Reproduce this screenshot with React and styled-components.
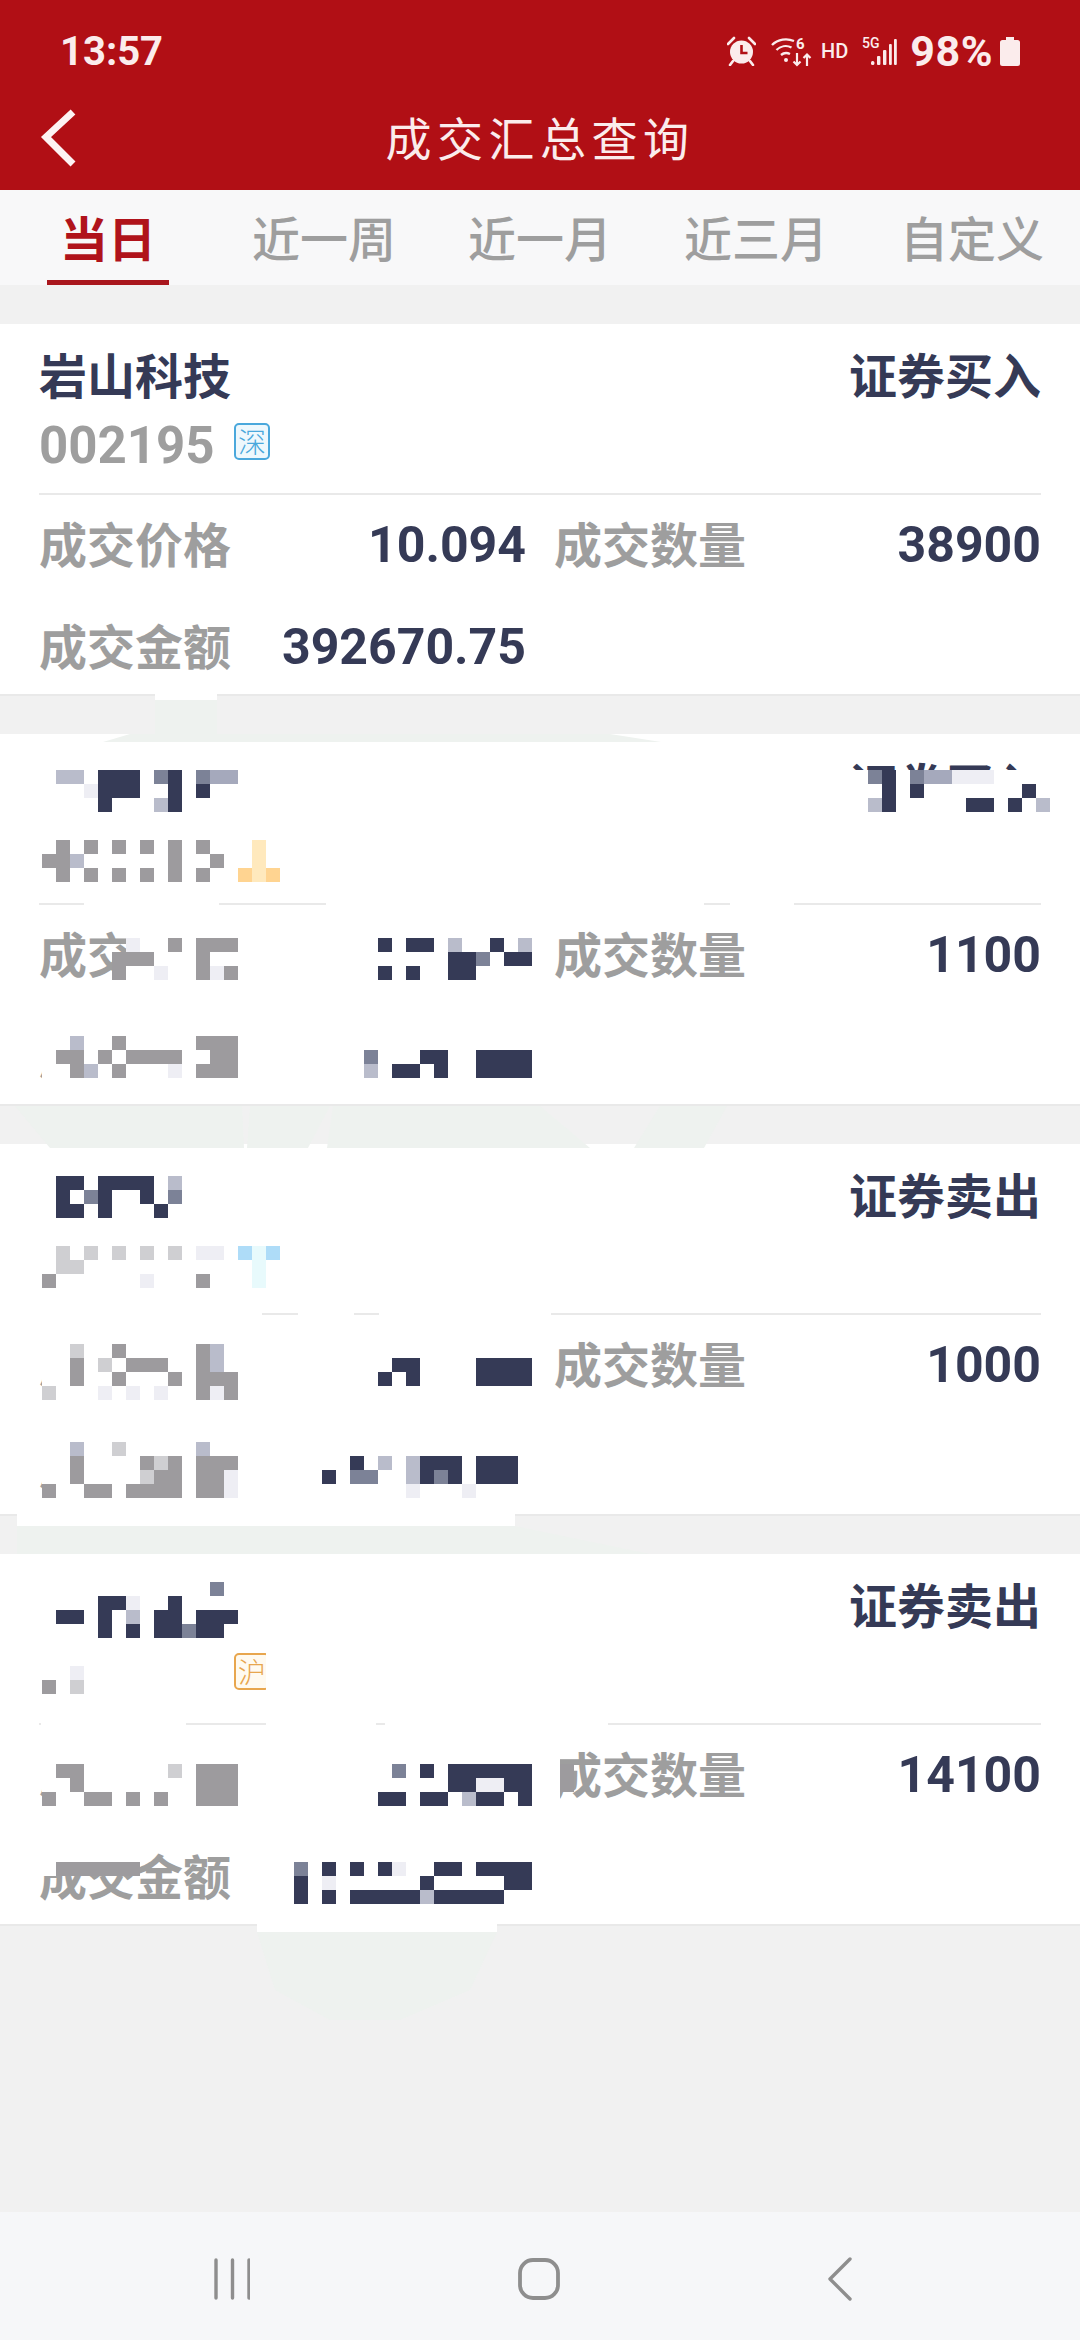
import React from 'react'
import styled, { createGlobalStyle } from 'styled-components'

const GlobalStyle = createGlobalStyle`
  html, body { margin: 0; padding: 0; background: #f1f1f1; }
  body { font-family: Roboto, "Noto Sans CJK SC", sans-serif; }
`

const CELL = 14
const palette = {
  d: '#353a56', m: '#7c8297', a: '#a5a9bc', l: '#b9bccb', e: '#eeeef4',
  g: '#9d9b9e', h: '#cfcfd2', y: '#ffe9bd', o: '#ffd491', b: '#aedcf8',
  p: '#e8fafc', '.': '#ffffff',
}

const tabs = ['当日', '近一周', '近一月', '近三月', '自定义']

const WHITE = '..............'

// mosaic blocks are placed on the 14px grid of the redaction, col 0 = x 42
const cards = [
  {
    name: '岩山科技', code: '002195', market: '深', side: '证券买入',
    price: '10.094', qty: '38900', amount: '392670.75',
  },
  {
    side: '证券买入', market: '沪', qty: '1100',
    gaps: [[84, 135], [326, 378], [730, 64]],
    masks: [
      { col: 0, y: 36, rows: [' ll ddd md maa', '   eddd  d d', '    d   ld'] },
      { col: 0, y: 92, rows: ['             ....', ' g g g g g g ..y.', 'ggl      g  g..y.', ' g g g g g g .oyo'] },
      { col: 5, y: 190, rows: [' ........', ' e..g.ggg', 'ggg...g..', 'g..e..geg'] },
      { col: 24, y: 204, rows: ['d.dd.l..d.l', '.....ddm.dd', 'd.d..dd....'] },
      { col: 0, y: 288, rows: [WHITE, '..l..g.....ggg', '.gg.g.gggg..gg', '..gl.g...e.ggg', WHITE] },
      { col: 23, y: 302, rows: ['', 'm...dd..dddd', 'l.dd.d..dddd'] },
      { col: 57, y: 36, rows: ['..md.maaeee....', '...d.d.......d.', '..ld.....dd.d.l'] },
    ],
  },
  {
    side: '证券卖出', market: '深', qty: '1000',
    gaps: [[39, 223], [298, 56], [379, 172]],
    masks: [
      { col: 0, y: 32, rows: [' dd dddd l', ' d md  d m', ' dd d   d'] },
      { col: 0, y: 88, rows: ['             ....', ' h h h h h ee.bpb', ' hh          ..p.', 'g      e   g ..p.'] },
      { col: 0, y: 186, rows: [WHITE, '..h..g.....gl.', '..g.h.ggg..gl.', '..g..g...g.ggg', 'h...e.e.e..geg'] },
      { col: 24, y: 214, rows: [' dd    dddd', 'd d    dddd'] },
      { col: 0, y: 284, rows: [WHITE, '..l..h.....l..', '..g....ghg.ggg', '..g....hgg.gge', 'g..gg.gggg.gge'] },
      { col: 20, y: 312, rows: ['  d l lddd ddd', 'd mm  ldmd ddd', '      e   e'] },
    ],
  },
  {
    side: '证券卖出', market: '沪', qty: '14100',
    gaps: [[41, 145], [266, 110], [385, 223]],
    masks: [
      { col: 0, y: 28, rows: ['            m', '    dde  d', ' dd d l dd ddd', '    d d ddmdd'] },
      { col: 0, y: 112, rows: ['  e', 'g h'] },
      { col: 16, y: 98, rows: ['.', '.', '.'] },
      { col: 0, y: 196, rows: [WHITE, '.gg......h.ggg', '..g........ggg', 'g..gg.g.g..ggg'] },
      { col: 24, y: 196, rows: ['           ..', ' m d dddddd..g', '     ddeedd..g', 'dd dd ldd d..'] },
      { col: 0, y: 294, rows: ['.......', '.gggggg'] },
      { col: 18, y: 308, rows: ['m d d de  dd dddd', 'd e      d     dd', 'd d dddddlddddd'] },
    ],
  },
]

const Page = styled.div`
  position: relative;
  width: 1080px;
  min-height: 2340px;
  display: flex;
  flex-direction: column;
  background: #f1f1f1;
  overflow: hidden;
`

const Header = styled.header`
  background: #b10f15;
  color: #fbecec;
`

const StatusBar = styled.div`
  height: 96px;
  box-sizing: border-box;
  padding: 6px 60px 0 60px;
  display: flex;
  align-items: center;
  justify-content: space-between;
`

const Clock = styled.span`
  font-size: 40px;
  font-weight: 700;
`

const StatusIcons = styled.div`
  display: flex;
  align-items: center;
`

const AlarmSlot = styled.span`
  display: flex;
  margin-right: 15px;
`

const HdLabel = styled.span`
  font-size: 20px;
  font-weight: 500;
  margin: 0 14px 0 9px;
`

const Battery = styled.span`
  font-size: 43px;
  font-weight: 700;
  letter-spacing: 0.5px;
  margin: 0 7px 0 13px;
`

const TitleBar = styled.div`
  height: 94px;
  box-sizing: border-box;
  padding-bottom: 10px;
  display: grid;
  grid-template-columns: 1fr auto 1fr;
  align-items: center;
`

const BackButton = styled.button`
  border: 0;
  padding: 0 0 0 40px;
  background: none;
  justify-self: start;
  display: flex;
`

const Title = styled.h1`
  margin: 0 0 5px;
  font-size: 46px;
  font-weight: 400;
  letter-spacing: 5.5px;
`

const TabBar = styled.nav`
  height: 95px;
  display: grid;
  grid-template-columns: repeat(5, 1fr);
  background: #f8f8f9;
`

const Tab = styled.div`
  position: relative;
  padding-bottom: 3px;
  display: flex;
  align-items: center;
  justify-content: center;
  font-size: 48px;
  font-weight: ${(p) => (p.$active ? 700 : 500)};
  color: ${(p) => (p.$active ? '#b0131b' : '#9e9e9e')};
  &::after {
    content: '';
    display: ${(p) => (p.$active ? 'block' : 'none')};
    position: absolute;
    bottom: 0;
    left: 47px;
    width: 122px;
    height: 5px;
    background: #a9161d;
  }
`

const List = styled.main`
  flex: 1;
  padding-top: 39px;
  display: flex;
  flex-direction: column;
  gap: 38px;
`

const Card = styled.article`
  position: relative;
  height: 372px;
  box-sizing: border-box;
  padding: 16px 39px 0;
  background: #fff;
  border-bottom: 2px solid #e9e9e9;
`

const TopRow = styled.div`
  height: 70px;
  display: flex;
  align-items: center;
  justify-content: space-between;
`

const Name = styled.div`
  padding-bottom: 5px;
  font-size: 48px;
  font-weight: 700;
  color: #353a56;
`

const CodeRow = styled.div`
  height: 70px;
  display: flex;
  align-items: center;
`

const Code = styled.span`
  width: 172px;
  font-size: 51px;
  font-weight: 700;
  color: #9e9e9e;
`

const Tag = styled.span`
  margin: -8px 0 0 23px;
  width: 36px;
  height: 37px;
  box-sizing: border-box;
  display: flex;
  align-items: center;
  justify-content: center;
  border: 2px solid ${(p) => p.$color};
  border-radius: 5px;
  background: ${(p) => p.$bg};
  color: ${(p) => p.$color};
  font-size: 28px;
  font-weight: 300;
`

const Divider = styled.div`
  height: 2px;
  margin-top: 13px;
  background: #e9e9e9;
`

const Details = styled.div`
  margin-top: 3px;
  display: grid;
  grid-template-columns: 487px 487px;
  grid-auto-rows: 94px;
  column-gap: 28px;
  row-gap: 8px;
`

const Field = styled.div`
  display: flex;
  align-items: center;
  justify-content: space-between;
`

const Label = styled.span`
  padding-bottom: 6px;
  font-size: 48px;
  font-weight: 700;
  color: #9e9e9e;
`

const Value = styled.span`
  font-size: 50px;
  font-weight: 700;
  color: #353a56;
`

const MosaicBox = styled.svg`
  position: absolute;
  left: ${(p) => 42 + p.$col * CELL}px;
  top: ${(p) => p.$y}px;
  shape-rendering: crispEdges;
`

const GapPatch = styled.div`
  position: absolute;
  top: 165px;
  height: 8px;
  left: ${(p) => p.$x}px;
  width: ${(p) => p.$w}px;
  background: #fff;
`

const Smudges = styled.svg`
  position: absolute;
  left: 0;
  top: 0;
  pointer-events: none;
`

const NavBar = styled.footer`
  height: 128px;
  box-sizing: border-box;
  padding: 5px 228px 0 214px;
  display: flex;
  align-items: center;
  justify-content: space-between;
  background: #f6f7f9;
`

function Mosaic({ col, y, rows }) {
  const width = Math.max(...rows.map((r) => r.length)) * CELL
  return (
    <MosaicBox $col={col} $y={y} width={width} height={rows.length * CELL} aria-hidden="true">
      {rows.map((row, r) =>
        [...row].map((c, i) =>
          c === ' ' ? null : (
            <rect key={`${r}-${i}`} x={i * CELL} y={r * CELL} width={CELL} height={CELL} fill={palette[c]} />
          )
        )
      )}
    </MosaicBox>
  )
}

const AlarmIcon = () => (
  <svg width="29" height="30" viewBox="0 0 29 30">
    <circle cx="14.5" cy="16" r="11.5" fill="#fbecec" />
    <path d="M14.5 9v8h6" fill="none" stroke="#b10f15" strokeWidth="2.6" />
    <path d="M1 8l6-6M28 8l-6-6" stroke="#fbecec" strokeWidth="2.6" strokeLinecap="round" />
    <path d="M6 25l-3 4M23 25l3 4" stroke="#fbecec" strokeWidth="2.6" strokeLinecap="round" />
  </svg>
)

const WifiIcon = () => (
  <svg width="41" height="31" viewBox="0 0 41 31">
    <g fill="none" stroke="#fbecec" strokeWidth="2.4">
      <path d="M1 9c6-6 15-7 22-4" />
      <path d="M5.5 14c4-4 10-5 15-2.5" />
      <path d="M10 19c3-2.5 6-2.5 9-1" />
    </g>
    <circle cx="15" cy="24" r="2" fill="#fbecec" />
    <text x="25" y="13" fontFamily="Roboto" fontSize="15" fontWeight="700" fill="#fbecec">6</text>
    <path d="M26 17v12M22.5 25.5l3.5 3.5 3.5-3.5M36 30V19M32.5 22l3.5-3.5 3.5 3.5" fill="none" stroke="#fbecec" strokeWidth="2.2" />
  </svg>
)

const SignalIcon = () => (
  <svg width="35" height="30" viewBox="0 0 35 30">
    <text x="0" y="12" fontFamily="Roboto" fontSize="14" fontWeight="500" fill="#fbecec">5G</text>
    <g fill="#fbecec">
      <rect x="9" y="25" width="3.4" height="4" rx="1.5" />
      <rect x="15" y="20" width="3.4" height="9" rx="1" />
      <rect x="21" y="14" width="3.4" height="15" rx="1" />
      <rect x="27" y="8" width="2.8" height="21" rx="1" />
      <rect x="32" y="3" width="2.8" height="26" rx="1" />
    </g>
  </svg>
)

const BatteryIcon = () => (
  <svg width="20" height="29" viewBox="0 0 20 29">
    <path d="M6 0h8v3h3.500a2.500 2.500 0 0 1 2.500 2.500v21a2.500 2.500 0 0 1-2.500 2.500h-15A2.500 2.500 0 0 1 0 26.500v-21A2.500 2.500 0 0 1 2.500 3H6z" fill="#fbecec" />
  </svg>
)

const BackIcon = () => (
  <svg width="36" height="58" viewBox="0 0 36 58">
    <path d="M33 3L6 28l27 27" fill="none" stroke="#fdf3f3" strokeWidth="7" />
  </svg>
)

const RecentsIcon = () => (
  <svg width="36" height="42" viewBox="0 0 36 42">
    <path d="M2 2v38M18.500 2v38M35 2v38" stroke="#8e8e8e" strokeWidth="3.400" strokeLinecap="round" />
  </svg>
)

const HomeIcon = () => (
  <svg width="44" height="44" viewBox="0 0 44 44">
    <rect x="3" y="3" width="38" height="38" rx="13" fill="none" stroke="#8e8e8e" strokeWidth="3.800" />
  </svg>
)

const SysBackIcon = () => (
  <svg width="24" height="44" viewBox="0 0 24 44">
    <path d="M22 2L2 22l20 20" fill="none" stroke="#8e8e8e" strokeWidth="3.400" strokeLinecap="round" strokeLinejoin="round" />
  </svg>
)

const markets = {
  深: { color: '#4aa8dc', bg: '#eef8fd' },
  沪: { color: '#e8a64e', bg: '#fffaf0' },
}

function TradeCard({ card }) {
  return (
    <Card>
      <TopRow>
        <Name>{card.name}</Name>
        <Name>{card.side}</Name>
      </TopRow>
      <CodeRow>
        <Code>{card.code}</Code>
        <Tag $color={markets[card.market].color} $bg={markets[card.market].bg}>{card.market}</Tag>
      </CodeRow>
      <Divider />
      <Details>
        <Field>
          <Label>成交价格</Label>
          <Value>{card.price}</Value>
        </Field>
        <Field>
          <Label>成交数量</Label>
          <Value>{card.qty}</Value>
        </Field>
        <Field>
          <Label>成交金额</Label>
          <Value>{card.amount}</Value>
        </Field>
      </Details>
      {card.gaps && card.gaps.map(([x, w]) => <GapPatch key={x} $x={x} $w={w} />)}
      {card.masks && card.masks.map((m) => <Mosaic key={`${m.col}-${m.y}`} {...m} />)}
    </Card>
  )
}

export default function App() {
  return (
    <Page>
      <GlobalStyle />
      <Header>
        <StatusBar>
          <Clock>13:57</Clock>
          <StatusIcons>
            <AlarmSlot><AlarmIcon /></AlarmSlot>
            <WifiIcon />
            <HdLabel>HD</HdLabel>
            <SignalIcon />
            <Battery>98%</Battery>
            <BatteryIcon />
          </StatusIcons>
        </StatusBar>
        <TitleBar>
          <BackButton aria-label="back"><BackIcon /></BackButton>
          <Title>成交汇总查询</Title>
        </TitleBar>
      </Header>
      <TabBar>
        {tabs.map((t, i) => (
          <Tab key={t} $active={i === 0}>{t}</Tab>
        ))}
      </TabBar>
      <List>
        {cards.map((c, i) => (
          <TradeCard key={i} card={c} />
        ))}
      </List>
      <NavBar>
        <RecentsIcon />
        <HomeIcon />
        <SysBackIcon />
      </NavBar>
      {/* pale leftovers of the retouching, between the cards */}
      <Smudges width="1080" height="2340" aria-hidden="true">
        <rect x="155" y="694" width="62" height="6" fill="#fff" />
        <rect x="17" y="1514" width="498" height="12" fill="#fff" />
        <rect x="257" y="1924" width="240" height="8" fill="#fff" />
        <g fill="#eef2ef">
          <polygon points="155,700 217,700 217,734 610,734 661,742 103,742 130,734 155,734" />
          <polygon points="15,1106 242,1106 244,1148 50,1148" />
          <polygon points="250,1106 330,1106 308,1148 247,1148" />
          <polygon points="333,1106 540,1106 590,1148 327,1148" />
          <polygon points="660,1106 727,1106 704,1148 634,1148" />
          <polygon points="17,1526 515,1526 650,1554 17,1554" />
          <polygon points="257,1932 497,1932 470,1990 400,2020 330,2020 275,1990" />
        </g>
      </Smudges>
    </Page>
  )
}
